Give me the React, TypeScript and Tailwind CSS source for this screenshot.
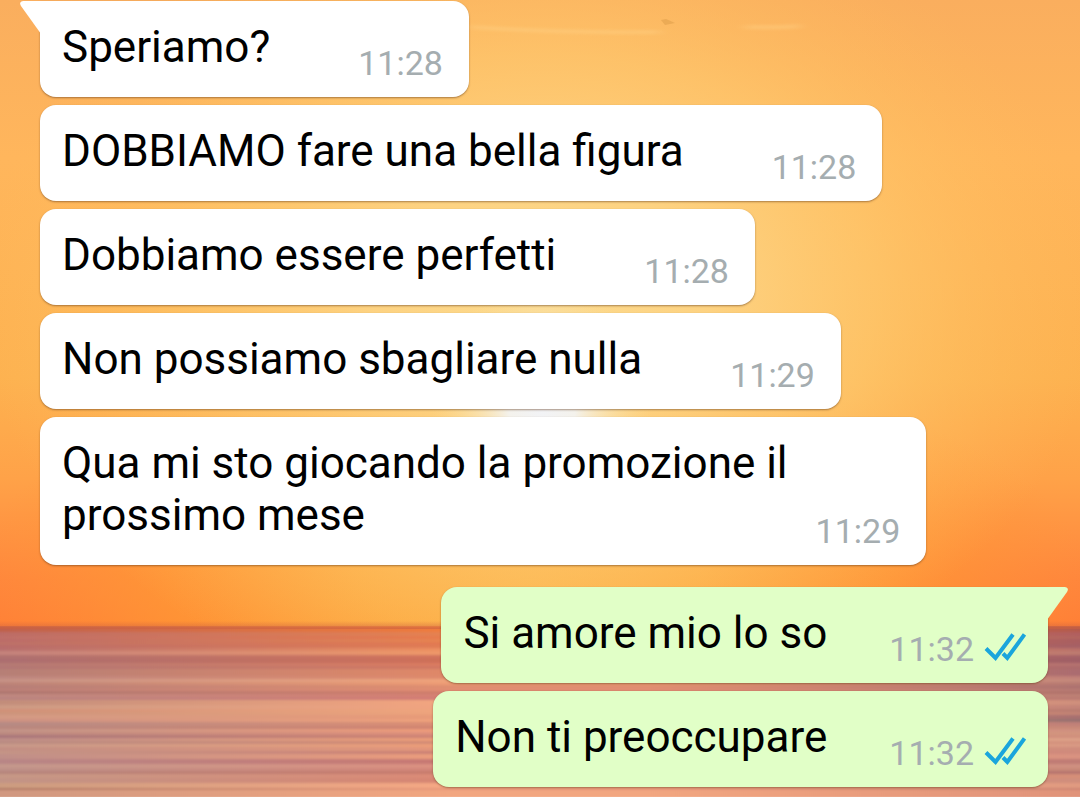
type Message = {
  lines: string[];
  time: string;
  sent?: boolean;
  tail?: boolean;
};

const received: Message[] = [
  { lines: ["Speriamo?"], time: "11:28", tail: true },
  { lines: ["DOBBIAMO fare una bella figura"], time: "11:28" },
  { lines: ["Dobbiamo essere perfetti"], time: "11:28" },
  { lines: ["Non possiamo sbagliare nulla"], time: "11:29" },
  { lines: ["Qua mi sto giocando la promozione il", "prossimo mese"], time: "11:29" },
];

const sent: Message[] = [
  { lines: ["Si amore mio lo so"], time: "11:32", sent: true, tail: true },
  { lines: ["Non ti preoccupare"], time: "11:32", sent: true },
];

// Water bands: top, height, left colour, middle colour, right colour
const waves: [number, number, string, string, string][] = [
  [626, 6, "#c0614c", "#f07c3c", "#b45a4c"],
  [632, 4, "#bc6c66", "#e68250", "#b05f5e"],
  [636, 3, "#bf7069", "#e87a4c", "#b2655f"],
  [639, 3, "#bb6c68", "#e88450", "#a95e60"],
  [642, 3, "#bd7168", "#e47a50", "#a85f62"],
  [645, 3, "#b86c6a", "#e27c54", "#a46066"],
  [648, 3, "#b8706e", "#ee9060", "#b97069"],
  [651, 4, "#c4827c", "#f09868", "#bd7a70"],
  [655, 3, "#b07270", "#d4745c", "#a66368"],
  [658, 5, "#ac6e70", "#d07058", "#a05f66"],
  [663, 3, "#b57a74", "#dc7c60", "#b57270"],
  [666, 3, "#b27774", "#d27862", "#ac6a6c"],
  [669, 7, "#b67f76", "#e08868", "#ab6c6f"],
  [676, 3, "#bd8780", "#e08a6c", "#c08078"],
  [679, 3, "#c69286", "#f0a47c", "#c4887c"],
  [682, 3, "#bd8478", "#ee9c74", "#b77a72"],
  [685, 4, "#b67e77", "#e08e70", "#ad7270"],
  [689, 2, "#bd8078", "#e48e72", "#b87c74"],
  [691, 3, "#ae7770", "#d07e6c", "#b0726c"],
  [694, 3, "#bf8880", "#d68072", "#bd8074"],
  [697, 3, "#b98480", "#d47c74", "#ba7a72"],
  [700, 5, "#c28d7a", "#f4a680", "#cf8f7c"],
  [705, 4, "#cc9a84", "#f2a480", "#c48478"],
  [709, 3, "#d09078", "#f0a67e", "#b87a70"],
  [712, 3, "#cc947c", "#eea47c", "#c28274"],
  [715, 4, "#d39a84", "#e89a78", "#a87070"],
  [719, 3, "#cc9182", "#f0a27c", "#96706f"],
  [722, 4, "#b68a84", "#dc8e74", "#c08078"],
  [726, 3, "#b8877e", "#d28470", "#c88878"],
  [729, 3, "#c29388", "#f09c7a", "#cf9080"],
  [732, 3, "#bc8a80", "#e0907a", "#d2947e"],
  [735, 3, "#a8767a", "#d08474", "#d08f7c"],
  [738, 3, "#bd8d87", "#ee9e78", "#dca088"],
  [741, 3, "#ba8c82", "#d48a74", "#d4937e"],
  [744, 3, "#c89a8a", "#ee9e78", "#d99a84"],
  [747, 4, "#c28f84", "#e4967a", "#cf8c7c"],
  [751, 3, "#c49486", "#cc8074", "#d08a7c"],
  [754, 5, "#c08f88", "#ec9c7c", "#d99280"],
  [759, 5, "#b88686", "#c87872", "#c07c74"],
  [764, 4, "#c4988c", "#dc9080", "#cf9080"],
  [768, 3, "#bd9088", "#d48678", "#c88878"],
  [771, 3, "#b6857c", "#c87a6c", "#b5746e"],
  [774, 4, "#c69886", "#dc8a76", "#d58e78"],
  [778, 5, "#c29486", "#d88672", "#d08e7c"],
  [783, 5, "#cc9c80", "#f6a884", "#e09a80"],
  [788, 2, "#b07a66", "#e8987a", "#cc8472"],
  [790, 7, "#d09880", "#f2a680", "#e0937a"],
];

function Backdrop() {
  return (
    <svg
      className="absolute inset-0 h-full w-full"
      viewBox="0 0 1080 797"
      preserveAspectRatio="none"
      aria-hidden="true"
    >
      <defs>
        <linearGradient id="sky" x1="0" y1="0" x2="0" y2="1">
          <stop offset="0" stopColor="#faae5e" />
          <stop offset="0.25" stopColor="#ffb65c" />
          <stop offset="0.6" stopColor="#fdb250" />
          <stop offset="0.76" stopColor="#ffa248" />
          <stop offset="0.92" stopColor="#ff863c" />
          <stop offset="1" stopColor="#ff7f36" />
        </linearGradient>
        <radialGradient id="halo" gradientUnits="userSpaceOnUse" cx="0" cy="0" r="1" gradientTransform="translate(540 300) scale(560 410)">
          <stop offset="0" stopColor="#fcda8e" />
          <stop offset="0.3" stopColor="#fdd484" stopOpacity="0.95" />
          <stop offset="0.6" stopColor="#fec96e" stopOpacity="0.7" />
          <stop offset="0.8" stopColor="#fec264" stopOpacity="0.35" />
          <stop offset="1" stopColor="#ffbc5c" stopOpacity="0" />
        </radialGradient>
        <radialGradient id="sun" gradientUnits="userSpaceOnUse" cx="0" cy="0" r="1" gradientTransform="translate(542 410) scale(110 130)">
          <stop offset="0" stopColor="#f2f3f6" />
          <stop offset="0.3" stopColor="#f4f2ec" />
          <stop offset="0.6" stopColor="#f8e8c0" stopOpacity="0.6" />
          <stop offset="1" stopColor="#fbdc94" stopOpacity="0" />
        </radialGradient>
        <radialGradient id="low" gradientUnits="userSpaceOnUse" cx="0" cy="0" r="1" gradientTransform="translate(530 580) scale(560 220)">
          <stop offset="0" stopColor="#fbb148" />
          <stop offset="0.3" stopColor="#fcac40" stopOpacity="0.9" />
          <stop offset="0.65" stopColor="#ff9c34" stopOpacity="0.65" />
          <stop offset="1" stopColor="#ff9838" stopOpacity="0" />
        </radialGradient>
        <linearGradient id="horizon" x1="0" y1="0" x2="0" y2="1">
          <stop offset="0" stopColor="#cc6040" stopOpacity="0" />
          <stop offset="1" stopColor="#cc6040" stopOpacity="0.6" />
        </linearGradient>
        <filter id="soften" x="0" y="0" width="1" height="1">
          <feGaussianBlur stdDeviation="0 0.8" />
        </filter>
        <filter id="wisp" x="-0.1" y="-0.5" width="1.2" height="2">
          <feGaussianBlur stdDeviation="6 1.5" />
        </filter>
        {waves.map(([y, , a, b, c]) => (
          <linearGradient key={y} id={`wave${y}`}>
            <stop offset="0" stopColor={a} />
            <stop offset="0.42" stopColor={b} />
            <stop offset="0.6" stopColor={b} />
            <stop offset="1" stopColor={c} />
          </linearGradient>
        ))}
      </defs>
      <rect width="1080" height="630" fill="url(#sky)" />
      <rect width="1080" height="630" fill="url(#low)" />
      <rect width="1080" height="630" fill="url(#halo)" />
      <rect width="1080" height="630" fill="url(#sun)" />
      <path
        d="M470 27Q560 33 660 32M745 27Q780 28 800 26"
        fill="none"
        stroke="#ffd084"
        strokeWidth="4"
        opacity="0.45"
        filter="url(#wisp)"
      />
      <path d="M661 20L666 19L675 23L665 25Z" fill="#dc9c48" opacity="0.5" />
      <g filter="url(#soften)">
        {waves.map(([y, h]) => (
          <rect key={y} y={y} width="1080" height={h + 1} fill={`url(#wave${y})`} />
        ))}
      </g>
      <rect y="621" width="1080" height="8" fill="url(#horizon)" />
    </svg>
  );
}

function ReadTicks() {
  return (
    <svg
      className="h-8 w-[42px]"
      viewBox="0 0 42 32"
      fill="none"
      stroke="#1aa5dc"
      strokeWidth="4"
      role="img"
      aria-label="Letto"
    >
      <path d="M2 15.500L11.500 25L29 1.500" />
      <path d="M19 20.500L23.300 25L40.500 1.500" />
    </svg>
  );
}

function Tail({ sent }: { sent?: boolean }) {
  return sent ? (
    <svg className="absolute top-0 -right-5 h-8 w-8" viewBox="0 0 32 32" fill="#e1ffc7" aria-hidden="true">
      <path d="M0 0H28.500Q33.500 0.500 31 5L12 31.500H0Z" />
    </svg>
  ) : (
    <svg className="absolute top-0 -left-5 h-8 w-8" viewBox="0 0 32 32" fill="#ffffff" aria-hidden="true">
      <path d="M32 0H3.500Q-1.500 0.500 1 5L20 31.500H32Z" />
    </svg>
  );
}

function Bubble({ lines, time, sent, tail }: Message) {
  const color = sent ? "bg-[#e1ffc7]" : "bg-white";
  const corner = tail ? (sent ? "rounded-tr-none" : "rounded-tl-none") : "";
  const gap = sent ? "gap-[62px]" : lines.length > 1 ? "gap-7" : "gap-[88px]";
  return (
    <li
      className={`relative flex w-fit items-end rounded-2xl pl-[22px] shadow-[0_1px_2px_rgba(90,50,20,0.5)] ${sent ? "self-end pr-[22px]" : "pr-[26px]"} ${color} ${corner} ${gap}`}
    >
      {tail && <Tail sent={sent} />}
      <p className="pt-5 pb-6 text-[44px] leading-[52px] text-black">
        {lines.map((line) => (
          <span key={line} className="block whitespace-nowrap">
            {line}
          </span>
        ))}
      </p>
      <div className="flex items-center gap-[10px] pb-[14px]">
        <time className="text-[34px] leading-10 text-[#a5adb0]">{time}</time>
        {sent && <ReadTicks />}
      </div>
    </li>
  );
}

export default function App() {
  return (
    <main className="relative min-h-screen overflow-hidden font-['Roboto',sans-serif]">
      <Backdrop />
      <div className="relative flex flex-col gap-[22px] pt-px pr-8 pb-[10px] pl-10">
        <ul className="flex flex-col gap-2">
          {received.map((m) => (
            <Bubble key={m.lines[0]} {...m} />
          ))}
        </ul>
        <ul className="flex flex-col gap-2">
          {sent.map((m) => (
            <Bubble key={m.lines[0]} {...m} />
          ))}
        </ul>
      </div>
    </main>
  );
}
